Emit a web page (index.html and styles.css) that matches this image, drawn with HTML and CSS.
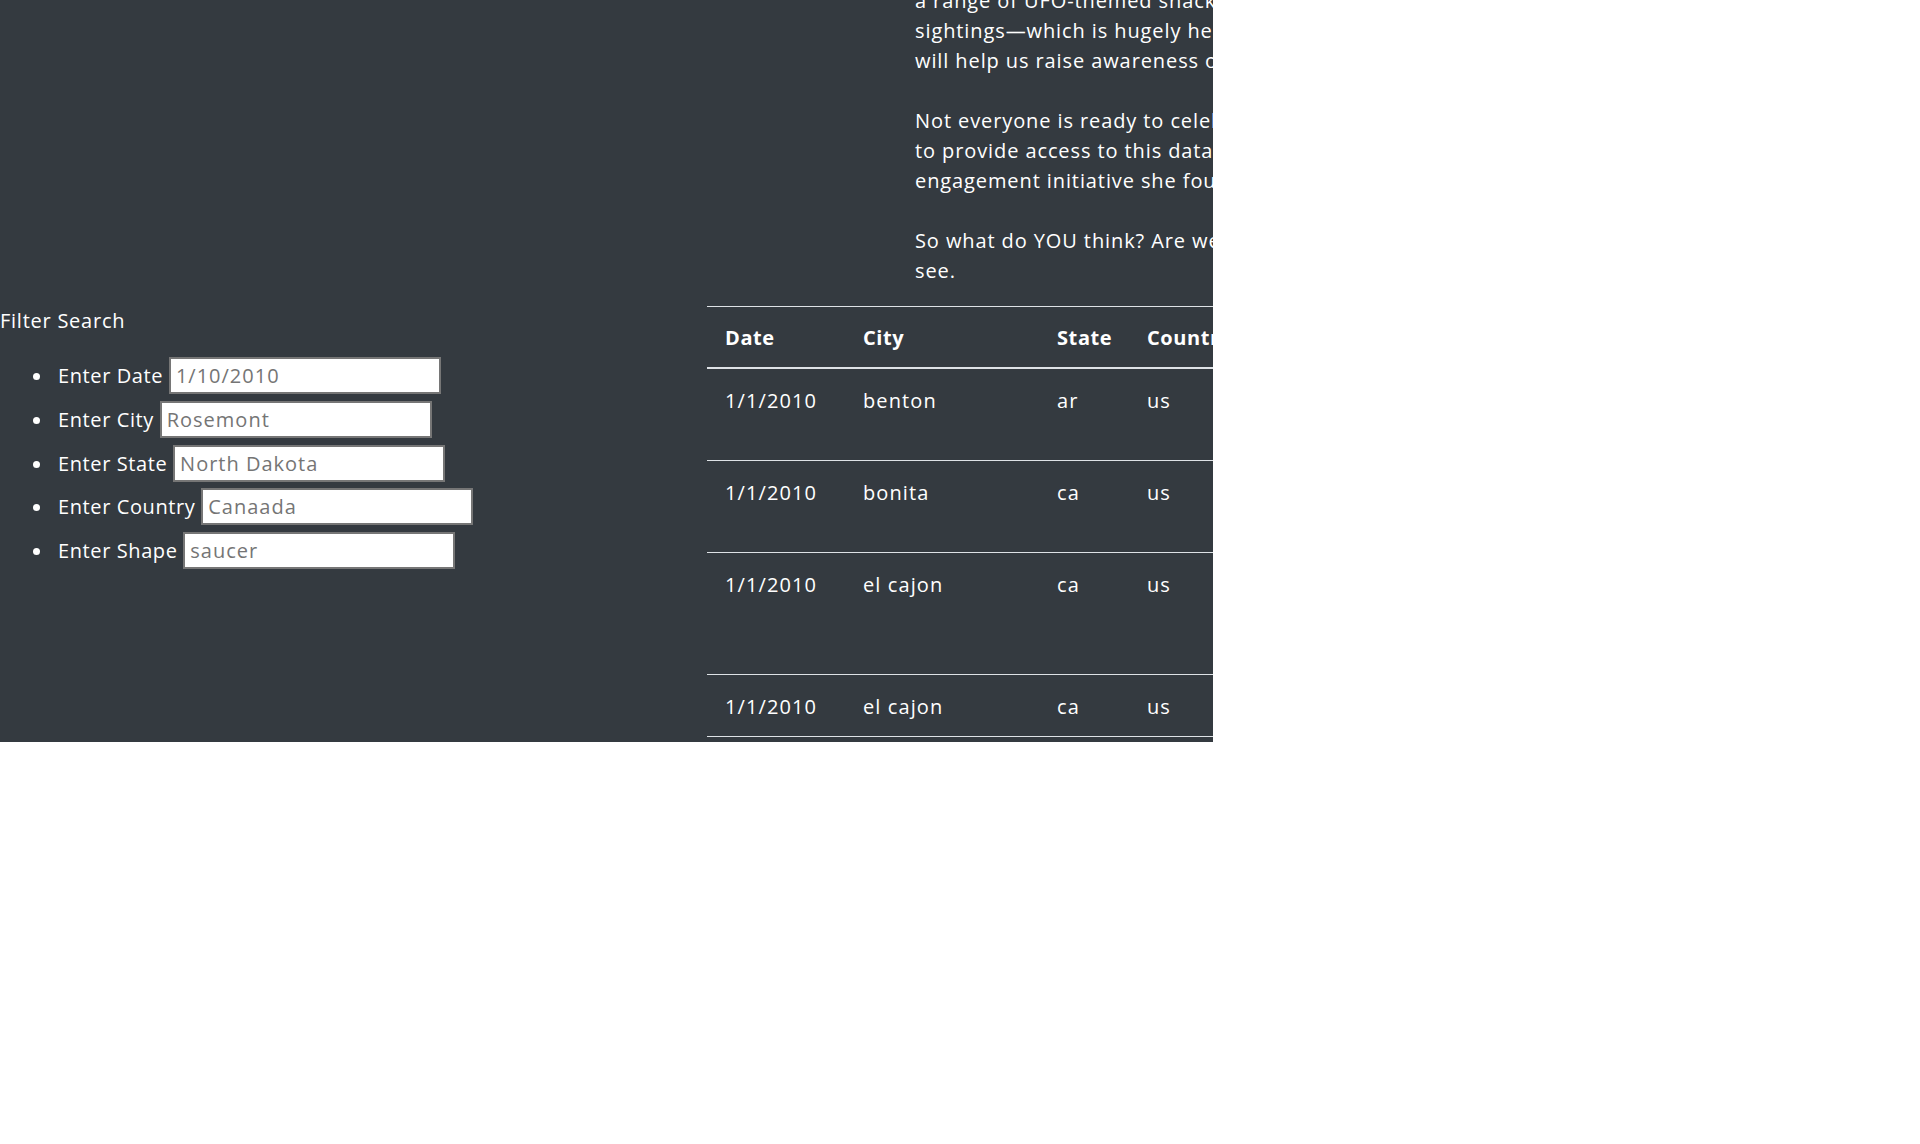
FILE: index.html
```html
<!DOCTYPE html>
<html lang="en">
<head>
<meta charset="utf-8">
<title>UFO Sightings</title>
<link rel="stylesheet" href="styles.css">
</head>
<body>
<div class="page">
  <div class="content">
    <section class="intro">
      <p>a range of UFO-themed snacks and entertainment, and this year she's also gathering data on UFO<br>
      sightings—which is hugely helpful, because these sightings have been reported all over the world. This data<br>
      will help us raise awareness of the phenomenon and encourage people to report what they see.</p>
      <p>Not everyone is ready to celebrate, however. Some people are skeptical, but Dana is determined<br>
      to provide access to this data, and she has made it part of the community<br>
      engagement initiative she founded last year to bring people together.</p>
      <p>So what do YOU think? Are we alone in the universe? Take a look at the data and decide for yourself. Let's<br>
      see.</p>
    </section>
    <div class="main">
      <aside class="filters">
        <h2 class="filters-title">Filter Search</h2>
        <ul class="filter-list">
          <li><label>Enter Date <input type="text" placeholder="1/10/2010"></label></li>
          <li><label>Enter City <input type="text" placeholder="Rosemont"></label></li>
          <li><label>Enter State <input type="text" placeholder="North Dakota"></label></li>
          <li><label>Enter Country <input type="text" placeholder="Canaada"></label></li>
          <li><label>Enter Shape <input type="text" placeholder="saucer"></label></li>
        </ul>
      </aside>
      <div class="table-col">
        <table class="ufo-table">
          <colgroup>
            <col class="c-date"><col class="c-city"><col class="c-state"><col class="c-country"><col class="c-shape"><col class="c-duration"><col class="c-comments">
          </colgroup>
          <thead>
            <tr><th>Date</th><th>City</th><th>State</th><th>Country</th><th>Shape</th><th>Duration</th><th>Comments</th></tr>
          </thead>
          <tbody>
            <tr><td>1/1/2010</td><td>benton</td><td>ar</td><td>us</td><td>circle</td><td>5 mins.</td><td>4 bright green circles high in the sky going in circles then one bright<br>green light at my front door.</td></tr>
            <tr><td>1/1/2010</td><td>bonita</td><td>ca</td><td>us</td><td>light</td><td>13 minutes</td><td>Three bright red lights witnessed floating stationary over San Diego<br>New Years Eve.</td></tr>
            <tr><td>1/1/2010</td><td>el cajon</td><td>ca</td><td>us</td><td>triangle</td><td>3 minutes</td><td>Strange triangle shaped craft spotted by military trained observers<br>over the skies of El Cajon on<br>New Years Eve.</td></tr>
            <tr><td>1/1/2010</td><td>el cajon</td><td>ca</td><td>us</td><td>light</td><td>15 minutes</td><td>Bright orange lights in sky.</td></tr>
            <tr><td>1/1/2010</td><td>el cajon</td><td>ca</td><td>us</td><td>light</td><td>10 minutes</td><td>Orange lights.</td></tr>
          </tbody>
        </table>
      </div>
    </div>
  </div>
</div>
</body>
</html>
```

FILE: styles.css
```css
* { box-sizing: border-box; }

body {
  margin: 0;
  background: #fff;
  font-family: "Open Sans", "Noto Sans", sans-serif;
}

.page {
  width: 1213px;
  height: 742px;
  overflow: hidden;
  background: #343a40;
  color: #fff;
  font-size: 20px;
  line-height: 30px;
  letter-spacing: 0.6px;
}

.content { margin-top: -14px; }

.intro {
  padding-left: 915px;
  white-space: nowrap;
  letter-spacing: 0.9px;
}
.intro p { margin: 0 0 30px; }
.intro p:last-child { margin-bottom: 20px; }

.main { display: flex; align-items: flex-start; }

.filters { flex: none; width: 707px; }

.filters-title {
  margin: 0;
  font-size: 20px;
  font-weight: 400;
  line-height: 30px;
  letter-spacing: 0.75px;
}

.filter-list {
  margin: 21px 0 0;
  padding-left: 58px;
  list-style: none;
}
.filter-list li { margin-bottom: 6.75px; line-height: 30px; }
.filter-list li::before {
  content: "";
  display: inline-block;
  width: 7px;
  height: 7px;
  margin-left: -25px;
  margin-right: 18px;
  border-radius: 50%;
  background: #fff;
  vertical-align: 3px;
}

.filter-list input {
  width: 272px;
  height: 37px;
  padding: 0 4px 0 5px;
  border: 2px solid #767676;
  background: #fff;
  font: inherit;
  letter-spacing: 1px;
  color: #222;
  vertical-align: baseline;
}
.filter-list input::placeholder { color: #757575; }

.table-col { flex: none; width: 1300px; }

.ufo-table {
  width: 100%;
  border-collapse: collapse;
  table-layout: fixed;
  white-space: nowrap;
}
.c-date { width: 138px; }
.c-city { width: 194px; }
.c-state { width: 90px; }
.c-country { width: 110px; }
.c-shape { width: 120px; }
.c-duration { width: 140px; }

.ufo-table th,
.ufo-table td {
  padding: 17px 12px 14px 18px;
  text-align: left;
  vertical-align: top;
  line-height: 30px;
  border-top: 1px solid #dee2e6;
}
.ufo-table td { letter-spacing: 1.1px; }
.ufo-table thead th {
  padding-top: 16px;
  padding-bottom: 14px;
  font-weight: 700;
  letter-spacing: 0.6px;
  border-bottom: 2px solid #dee2e6;
}
```
